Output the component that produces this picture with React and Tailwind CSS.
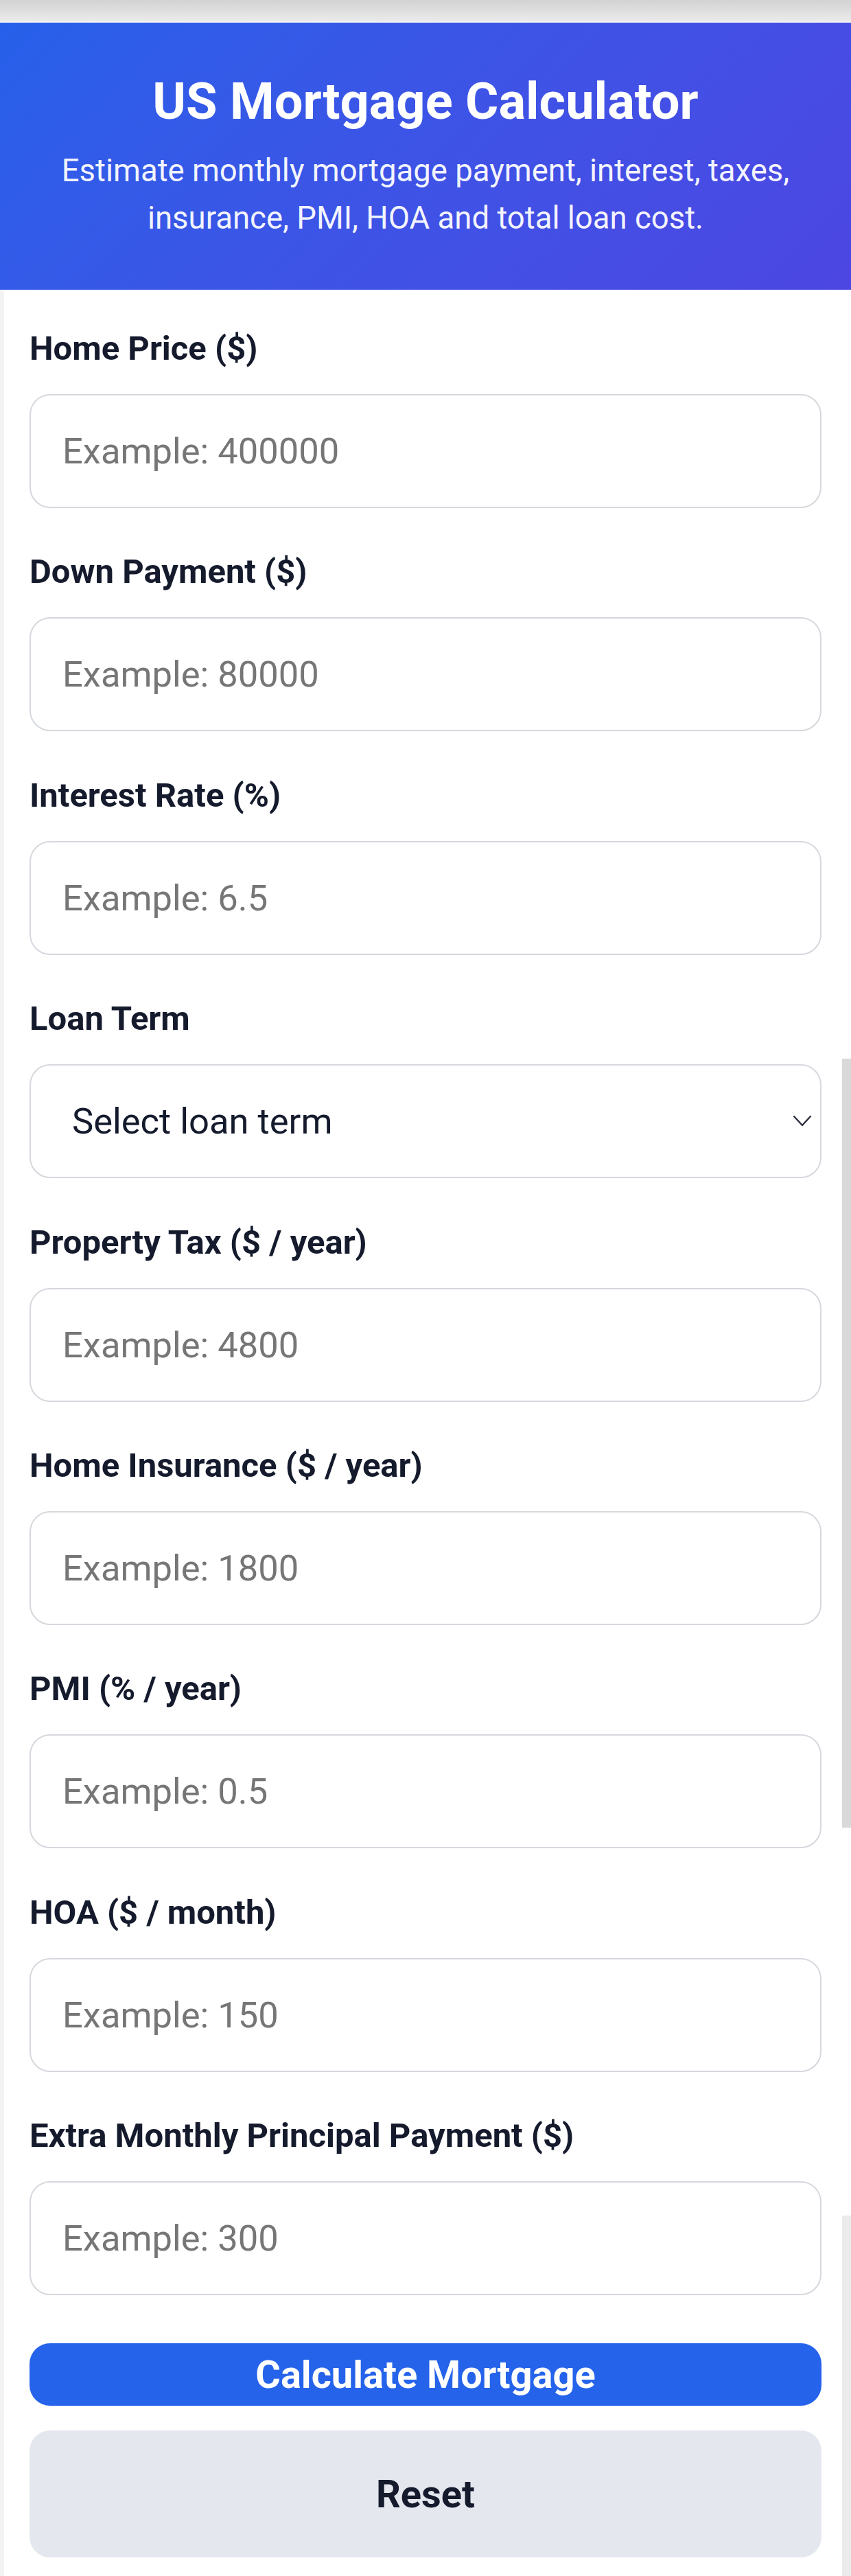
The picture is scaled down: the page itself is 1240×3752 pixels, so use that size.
import { useState } from 'react'

const fields = [
  { id: 'price', label: 'Home Price ($)', placeholder: 'Example: 400000' },
  { id: 'down', label: 'Down Payment ($)', placeholder: 'Example: 80000' },
  { id: 'rate', label: 'Interest Rate (%)', placeholder: 'Example: 6.5' },
  { id: 'term', label: 'Loan Term', select: true },
  { id: 'tax', label: 'Property Tax ($ / year)', placeholder: 'Example: 4800' },
  { id: 'ins', label: 'Home Insurance ($ / year)', placeholder: 'Example: 1800' },
  { id: 'pmi', label: 'PMI (% / year)', placeholder: 'Example: 0.5' },
  { id: 'hoa', label: 'HOA ($ / month)', placeholder: 'Example: 150' },
  { id: 'extra', label: 'Extra Monthly Principal Payment ($)', placeholder: 'Example: 300' },
]

function Field({ field, value, onChange }) {
  return (
    <div className="flex flex-col">
      <label
        htmlFor={field.id}
        className="mb-[40px] text-[49px] leading-[53px] font-bold text-[#151b2d]"
      >
        {field.label}
      </label>
      {field.select ? (
        <div className="relative">
          <select
            id={field.id}
            value={value}
            onChange={(e) => onChange(e.target.value)}
            className="h-[166px] w-full appearance-none rounded-[30px] border-2 border-[#d5d8dd] bg-white pl-[60px] pr-[70px] text-[52.5px] text-[#151b2d] outline-none"
          >
            <option value="">Select loan term</option>
            <option value="30">30 years</option>
            <option value="20">20 years</option>
            <option value="15">15 years</option>
            <option value="10">10 years</option>
          </select>
          <svg
            className="pointer-events-none absolute right-[14px] top-[74px]"
            width="28"
            height="17"
            viewBox="0 0 28 17"
            fill="none"
          >
            <polyline points="1.5,1.5 14,15 26.5,1.5" stroke="#2a2f3a" strokeWidth="2.4" strokeLinejoin="round" />
          </svg>
        </div>
      ) : (
        <input
          id={field.id}
          type="number"
          inputMode="decimal"
          value={value}
          onChange={(e) => onChange(e.target.value)}
          placeholder={field.placeholder}
          className="h-[166px] w-full rounded-[30px] border-2 border-[#d5d8dd] bg-white px-[46px] text-[52.5px] text-[#151b2d] outline-none placeholder:text-[#767676]"
        />
      )}
    </div>
  )
}

export default function App() {
  const [values, setValues] = useState({})

  const setField = (id) => (v) => setValues((prev) => ({ ...prev, [id]: v }))

  return (
    <div className="relative min-h-[3752px] w-full overflow-hidden bg-white font-['Roboto','Liberation_Sans',sans-serif]">
      {/* browser chrome shadow */}
      <div className="h-[31px] bg-gradient-to-b from-[#d2d2d2] to-[#ebebeb]" />
      <div className="h-[2px] bg-[#f3f3f3]" />

      <header className="bg-linear-135 from-[#2660ea] to-[#4c46e2] px-[30px] pb-[70px] pt-[72px] text-center text-white">
        <h1 className="text-[74px] font-bold leading-[86px]">US Mortgage Calculator</h1>
        <p className="mt-[23px] text-[45.5px] leading-[69px] text-white/95">
          Estimate monthly mortgage payment, interest, taxes,
          <br />
          insurance, PMI, HOA and total loan cost.
        </p>
      </header>

      <main className="border-l-[6px] border-[#f3f3f3] pb-[27px] pl-[37px] pr-[43px] pt-[59px]">
        <div className="flex flex-col gap-[66.4px]">
          {fields.map((f) => (
            <Field key={f.id} field={f} value={values[f.id] ?? ''} onChange={setField(f.id)} />
          ))}
        </div>

        <button
          type="button"
          className="mt-[70px] flex h-[91px] w-full items-center justify-center rounded-[30px] bg-[#2563eb] text-[56px] font-bold text-white"
        >
          Calculate Mortgage
        </button>
        <button
          type="button"
          onClick={() => setValues({})}
          className="mt-[36px] flex h-[185px] w-full items-center justify-center rounded-[30px] bg-[#e4e8ee] text-[56px] font-bold text-[#151b2d]"
        >
          Reset
        </button>
      </main>

      {/* scrollbar traces */}
      <div className="absolute right-0 top-[1542px] h-[1120px] w-[13px] bg-[#d9d9d9]" />
      <div className="absolute bottom-0 right-0 top-[3227px] w-[13px] bg-[#ebebeb]" />
    </div>
  )
}
